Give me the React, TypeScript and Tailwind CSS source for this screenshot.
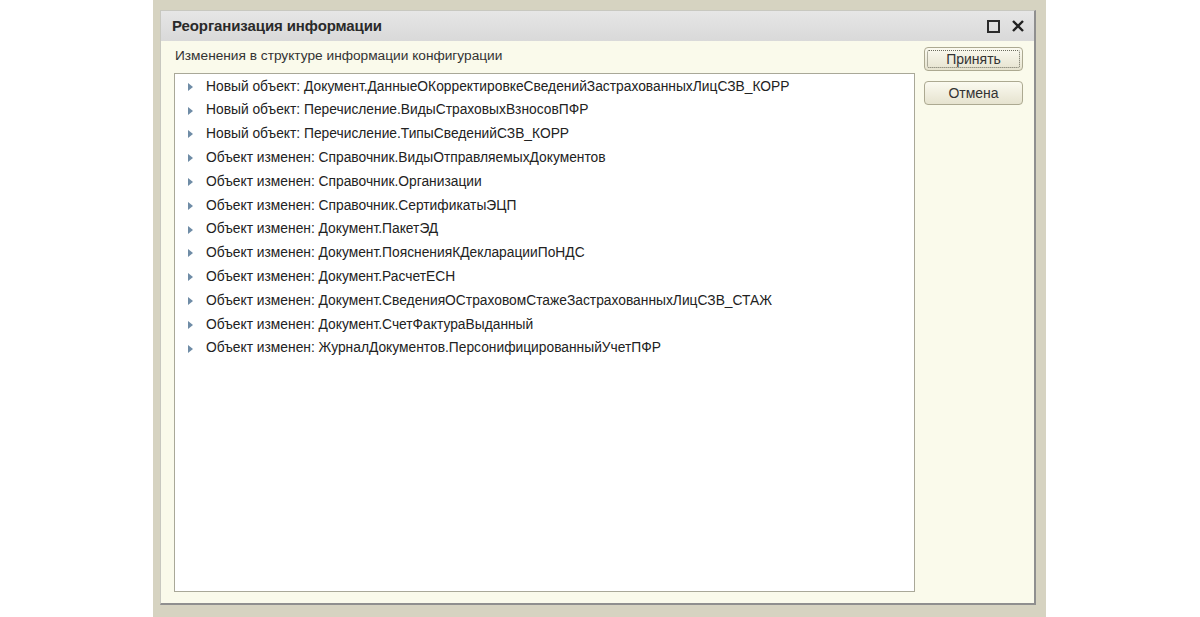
import React from "react"

const rows = [
  "Новый объект: Документ.ДанныеОКорректировкеСведенийЗастрахованныхЛицСЗВ_КОРР",
  "Новый объект: Перечисление.ВидыСтраховыхВзносовПФР",
  "Новый объект: Перечисление.ТипыСведенийСЗВ_КОРР",
  "Объект изменен: Справочник.ВидыОтправляемыхДокументов",
  "Объект изменен: Справочник.Организации",
  "Объект изменен: Справочник.СертификатыЭЦП",
  "Объект изменен: Документ.ПакетЭД",
  "Объект изменен: Документ.ПоясненияКДекларацииПоНДС",
  "Объект изменен: Документ.РасчетЕСН",
  "Объект изменен: Документ.СведенияОСтраховомСтажеЗастрахованныхЛицСЗВ_СТАЖ",
  "Объект изменен: Документ.СчетФактураВыданный",
  "Объект изменен: ЖурналДокументов.ПерсонифицированныйУчетПФР",
]

function Arrow() {
  return (
    <svg width="6" height="8" viewBox="0 0 6 8" className="shrink-0">
      <path d="M0 0 L5 4 L0 8 Z" fill="#6f8ca6" />
    </svg>
  )
}

export default function App() {
  return (
    <div
      className="w-[1200px] h-[617px] bg-white flex overflow-hidden"
      style={{ fontFamily: '"Liberation Sans", Arial, sans-serif' }}
    >
      <div className="w-[893px] h-[617px] bg-[#d6d3c1] ml-[153px] pt-[10px] pl-[7px] pr-[10px]">
        <div className="h-[595px] bg-[#fafaeb] border border-[#c8c8c0] border-r-[#8f8f8f] border-b-[#8f8f8f] border-b-2 border-r-2 flex flex-col">
          {/* title bar */}
          <div className="h-[30px] shrink-0 bg-gradient-to-b from-[#e6e6e6] to-[#d9d9d9] flex items-center pl-[11px] pr-[10px]">
            <span className="text-[15px] font-bold text-[#2a2a2a] tracking-[-0.1px]">Реорганизация информации</span>
            <div className="ml-auto flex items-center gap-[12px]">
              <div className="w-[13px] h-[13px] border-2 border-[#2b2b2b]" />
              <svg width="12" height="12" viewBox="0 0 12 12">
                <path d="M1 1 L11 11 M11 1 L1 11" stroke="#222" strokeWidth="2.4" />
              </svg>
            </div>
          </div>
          {/* body */}
          <div className="flex flex-1 pl-[13px] pr-[11px] pt-[5px] pb-[11px]">
            <div className="flex flex-col flex-1">
              <div className="text-[13.7px] text-[#333] h-[19px] leading-[19px] pl-px">
                Изменения в структуре информации конфигурации
              </div>
              <div className="mt-[8px] w-[741px] flex-1 bg-white border border-[#a9a898] pt-px">
                {rows.map((r) => (
                  <div key={r} className="h-[23.8px] flex items-center pl-[13px] gap-[12px]">
                    <Arrow />
                    <span className="text-[13.8px] text-[#222] whitespace-nowrap">{r}</span>
                  </div>
                ))}
              </div>
            </div>
            <div className="flex flex-col gap-[10px] pt-px">
              <button className="w-[99px] h-[24px] rounded-[4px] border border-[#aca991] bg-gradient-to-b from-[#fbfaf0] to-[#e6e3cf] p-[2px]">
                <div className="w-full h-full border border-dotted border-[#6b6b5c] rounded-[2px] flex items-center justify-center text-[14px] text-[#333]">
                  Принять
                </div>
              </button>
              <button className="w-[99px] h-[24px] rounded-[4px] border border-[#aca991] bg-gradient-to-b from-[#fbfaf0] to-[#e6e3cf] flex items-center justify-center text-[14px] text-[#333]">
                Отмена
              </button>
            </div>
          </div>
        </div>
      </div>
    </div>
  )
}
